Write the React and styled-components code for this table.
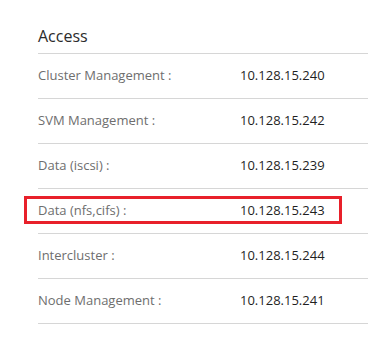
import React from "react";
import styled, { createGlobalStyle } from "styled-components";

const GlobalStyle = createGlobalStyle`
  html, body {
    margin: 0;
    padding: 0;
    background: #ffffff;
  }
  body {
    font-family: "Open Sans", "Noto Sans", sans-serif;
  }
`;

const Panel = styled.section`
  padding-left: 38px;
  padding-bottom: 16px;
`;

const Title = styled.h2`
  margin: 0;
  padding: 25px 0 6px;
  font-size: 16px;
  line-height: 22px;
  font-weight: 400;
  color: #2b2b2b;
  border-bottom: 1px solid #d6d6d6;
`;

const List = styled.div`
  display: flex;
  flex-direction: column;
`;

const Row = styled.div`
  position: relative;
  display: grid;
  grid-template-columns: 202px 1fr;
  padding: 12px 0 14px;
  font-size: 13px;
  line-height: 18px;
  border-bottom: 1px solid #d6d6d6;
`;

const Label = styled.span`
  color: #6e6e6e;
`;

const Value = styled.span`
  color: #1f1f1f;
`;

const Highlight = styled.div`
  position: absolute;
  left: -14px;
  top: 7px;
  width: 318px;
  height: 28px;
  box-sizing: border-box;
  border: 3px solid #e8202a;
  pointer-events: none;
`;

const rows = [
  { label: "Cluster Management :", value: "10.128.15.240" },
  { label: "SVM Management :", value: "10.128.15.242" },
  { label: "Data (iscsi) :", value: "10.128.15.239" },
  { label: "Data (nfs,cifs) :", value: "10.128.15.243", marked: true },
  { label: "Intercluster :", value: "10.128.15.244" },
  { label: "Node Management :", value: "10.128.15.241" },
];

export default function App() {
  return (
    <>
      <GlobalStyle />
      <Panel>
        <Title>Access</Title>
        <List>
          {rows.map(r => (
            <Row key={r.label}>
              <Label>{r.label}</Label>
              <Value>{r.value}</Value>
              {r.marked && <Highlight />}
            </Row>
          ))}
        </List>
      </Panel>
    </>
  );
}
